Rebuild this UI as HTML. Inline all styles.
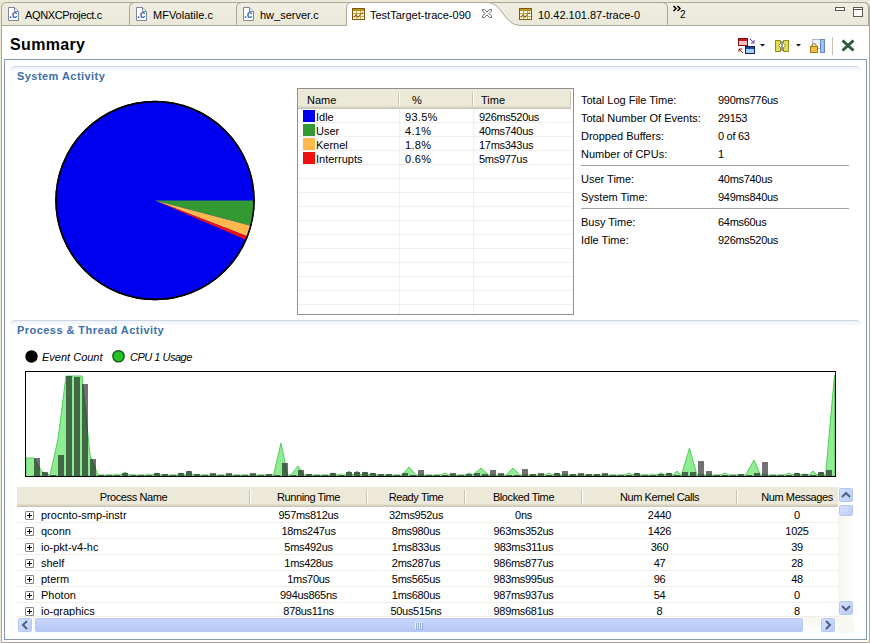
<!DOCTYPE html>
<html>
<head>
<meta charset="utf-8">
<title>Summary</title>
<style>
html,body{margin:0;padding:0;}
body{width:870px;height:643px;overflow:hidden;background:#ece9d8;position:relative;
 font-family:"Liberation Sans",sans-serif;font-size:11px;color:#000;line-height:13px;}
.a{position:absolute;white-space:nowrap;}
.sec{font-weight:bold;color:#3d6fa8;font-size:11px;letter-spacing:0.45px;}
.lbl{left:581px;}
.num{letter-spacing:-0.3px;}
.hd{letter-spacing:-0.4px;}
.val{left:718px;}
.row{left:17px;width:821px;height:16px;border-bottom:1px solid #f1efe6;box-sizing:border-box;overflow:hidden;}
.row span{position:absolute;top:2px;text-align:center;}
.row .n{left:24px;text-align:left;}
.c1{left:233px;width:117px}.c2{left:350px;width:98px}.c3{left:448px;width:117px}.c4{left:565px;width:155px}.c5{left:720px;width:120px}
.plus{position:absolute;left:8px;top:4px;width:7px;height:7px;border:1px solid #848484;background:#fff;border-radius:1px;}
.plus:before{content:"";position:absolute;left:1px;top:3px;width:5px;height:1px;background:#000;}
.plus:after{content:"";position:absolute;left:3px;top:1px;width:1px;height:5px;background:#000;}
.sw{position:absolute;left:5px;top:1px;width:12px;height:12px;}
.trow{left:298px;width:275px;height:14px;border-bottom:1px solid #efefef;box-sizing:border-box;}
.trow span{position:absolute;top:2px;line-height:12px}
.hsep{width:1px;background:#c7c5b2;box-shadow:1px 0 0 #fff;}
</style>
</head>
<body>

<div class="a" style="left:1px;top:2px;width:867px;height:639px;border:1px solid #aca899;border-radius:6px 6px 0 0;background:#fff"></div>
<svg class="a" style="left:0;top:0" width="870" height="30" viewBox="0 0 870 30">
<defs><linearGradient id="tg" x1="0" y1="0" x2="0" y2="1"><stop offset="0" stop-color="#efeee2"/><stop offset="1" stop-color="#eae8d8"/></linearGradient></defs>
<path d="M1.500 25.500 V8 Q1.500 2.500 7 2.500 H863 Q868.500 2.500 868.500 8 V25.500 Z" fill="url(#tg)" stroke="#aca899"/>
<path d="M346.500 27 V8 Q346.500 2.500 352 2.500 H488 C502 2.500 504 25.500 520 25.500 H524 V27 Z" fill="#fff"/>
<path d="M1.500 25.500 H346.500 V8 Q346.500 2.500 352 2.500 H488 C502 2.500 504 25.500 520 25.500 H868.500" fill="none" stroke="#aca899"/>
<path d="M129.500 25 V7 Q129.500 3 133.500 3" fill="none" stroke="#aca899"/>
<path d="M236.500 25 V7 Q236.500 3 240.500 3" fill="none" stroke="#aca899"/>
<path d="M667.500 25 V7 Q667.500 3 663.500 3" fill="none" stroke="#aca899"/>
<!-- close X on active tab -->
<path d="M482.500 9.500 L484.500 9.500 L487 12 L489.500 9.500 L491.500 9.500 L491.500 11 L489 13.500 L491.500 16 L491.500 17.500 L489.500 17.500 L487 15 L484.500 17.500 L482.500 17.500 L482.500 16 L485 13.500 L482.500 11 Z" fill="#fff" stroke="#6b6b6b" stroke-width="1"/>
<!-- chevron >> -->
<path d="M673.500 6 L676 8.500 L673.500 11 M677.500 6 L680 8.500 L677.500 11" fill="none" stroke="#000" stroke-width="1.500"/>
<!-- minimize / maximize -->
<rect x="835.500" y="7.500" width="9" height="3" fill="#fff" stroke="#5a5a4e"/>
<rect x="853.500" y="7.500" width="9" height="9" fill="#fff" stroke="#5a5a4e"/>
<path d="M854 9.500 H862" stroke="#5a5a4e"/>
</svg>
<svg class="a" style="left:8px;top:7px" width="12" height="15" viewBox="0 0 12 15">
<path d="M0.500 0.500 H6.500 L10.500 4.500 V13.500 H0.500 Z" fill="#fff" stroke="#83859a"/>
<path d="M6.500 0.500 V4.500 H10.500" fill="#e8eaf4" stroke="#83859a"/>
<text x="1" y="11" font-family="Liberation Sans, sans-serif" font-size="10" font-weight="bold" fill="#2a68b8">.c</text>
</svg>
<div class="a" style="left:25px;top:9px;letter-spacing:-0.36px">AQNXCProject.c</div>
<svg class="a" style="left:136px;top:7px" width="12" height="15" viewBox="0 0 12 15">
<path d="M0.500 0.500 H6.500 L10.500 4.500 V13.500 H0.500 Z" fill="#fff" stroke="#83859a"/>
<path d="M6.500 0.500 V4.500 H10.500" fill="#e8eaf4" stroke="#83859a"/>
<text x="1" y="11" font-family="Liberation Sans, sans-serif" font-size="10" font-weight="bold" fill="#2a68b8">.c</text>
</svg>
<div class="a" style="left:153px;top:9px">MFVolatile.c</div>
<svg class="a" style="left:243px;top:7px" width="12" height="15" viewBox="0 0 12 15">
<path d="M0.500 0.500 H6.500 L10.500 4.500 V13.500 H0.500 Z" fill="#fff" stroke="#83859a"/>
<path d="M6.500 0.500 V4.500 H10.500" fill="#e8eaf4" stroke="#83859a"/>
<text x="1" y="11" font-family="Liberation Sans, sans-serif" font-size="10" font-weight="bold" fill="#2a68b8">.c</text>
</svg>
<div class="a" style="left:260px;top:9px">hw_server.c</div>
<svg class="a" style="left:352px;top:8px" width="13" height="12" viewBox="0 0 13 12">
<rect x="0.500" y="0.500" width="12" height="11" fill="#fff8e0" stroke="#7d5a0f"/>
<rect x="1" y="1" width="11" height="2" fill="#b8921f"/>
<path d="M1 5.500 H12 M1 8.500 H12 M4.500 3 V11 M8.500 3 V11" stroke="#c4a548" fill="none"/>
<path d="M2 9.500 L4 6.500 L6 9.500 L8 6.500 L11 4.500" stroke="#7d5a0f" fill="none"/>
</svg>
<div class="a" style="left:370px;top:9px">TestTarget-trace-090</div>
<svg class="a" style="left:519px;top:8px" width="13" height="12" viewBox="0 0 13 12">
<rect x="0.500" y="0.500" width="12" height="11" fill="#fff8e0" stroke="#7d5a0f"/>
<rect x="1" y="1" width="11" height="2" fill="#b8921f"/>
<path d="M1 5.500 H12 M1 8.500 H12 M4.500 3 V11 M8.500 3 V11" stroke="#c4a548" fill="none"/>
<path d="M2 9.500 L4 6.500 L6 9.500 L8 6.500 L11 4.500" stroke="#7d5a0f" fill="none"/>
</svg>
<div class="a" style="left:538px;top:9px">10.42.101.87-trace-0</div>
<div class="a" style="left:680px;top:8px;font-size:10px">2</div>
<div class="a" style="left:10px;top:35px;font-size:16px;font-weight:bold;line-height:20px;letter-spacing:0.35px">Summary</div>
<svg class="a" style="left:730px;top:34px" width="130" height="24" viewBox="730 34 130 24">
<!-- icon 1: two windows with arrows -->
<rect x="738.500" y="38.500" width="9" height="7" fill="#f6c0c0" stroke="#7a1010"/>
<rect x="739" y="39" width="8" height="2" fill="#c01818"/>
<rect x="745.500" y="46.500" width="9" height="7" fill="#9fd0f0" stroke="#102060"/>
<rect x="746" y="47" width="8" height="2" fill="#1848a0"/>
<path d="M750 39 L754 43 M754 40 V43 H751" stroke="#5a3aa8" fill="none"/>
<path d="M743 53 L739 49 M739 52 V49 H742" stroke="#b01010" fill="none"/>
<path d="M760 44 H765 L762.500 46.500 Z" fill="#000"/>
<!-- icon 2: compare -->
<path d="M775.500 40.500 H780.500 V43.500 L778.500 45.500 L780.500 47.500 V51.500 H775.500 Z" fill="#dede58" stroke="#8a8a20"/>
<path d="M788.500 40.500 H783.500 V43.500 L785.500 45.500 L783.500 47.500 V51.500 H788.500 Z" fill="#dede58" stroke="#8a8a20"/>
<path d="M782 41 V51" stroke="#404030"/>
<path d="M796 44 H801 L798.500 46.500 Z" fill="#000"/>
<!-- icon 3: lock + panel -->
<rect x="812.500" y="39.500" width="8" height="9" fill="#eef2fb" stroke="#a8b8d8"/>
<rect x="820.500" y="39.500" width="4" height="13" fill="#9fc0f0" stroke="#6888c0"/>
<rect x="810.500" y="46.500" width="7" height="6" fill="#f0c040" stroke="#a07810"/>
<path d="M812 46 V44.500 Q814 42.500 816 44.500 V46" fill="none" stroke="#a07810"/>
<!-- separator -->
<path d="M832.500 37 V55" stroke="#c5c2b0"/>
<!-- X -->
<path d="M842.500 40.500 L853.500 50.500 M853.500 40.500 L842.500 50.500" stroke="#2c5a34" stroke-width="3" fill="none"/>
</svg>
<div class="a" style="left:4px;top:59px;width:863px;height:581px;border:1px solid #8497ae;box-sizing:border-box"></div>
<div class="a" style="left:10px;top:66px;width:851px;height:6px;border-top:1px solid #cdd6e4;border-radius:5px 5px 0 0;background:linear-gradient(#edf2fa,#fff)"></div>
<div class="a sec" style="left:17px;top:70px">System Activity</div>
<div class="a" style="left:10px;top:320px;width:851px;height:6px;border-top:1px solid #cdd6e4;border-radius:5px 5px 0 0;background:linear-gradient(#edf2fa,#fff)"></div>
<div class="a sec" style="left:17px;top:324px">Process &amp; Thread Activity</div>
<svg class="a" style="left:50px;top:95px" width="210" height="212" viewBox="50 95 210 212"><circle cx="155" cy="200.5" r="99" fill="#0000f0" stroke="#000" stroke-width="1.500"/><path d="M155 200.5 L254.00 200.50 A99 99 0 0 1 250.73 225.72 Z" fill="#339933"/><path d="M155 200.5 L250.73 225.72 A99 99 0 0 1 247.28 236.37 Z" fill="#ffb84d"/><path d="M155 200.5 L247.28 236.37 A99 99 0 0 1 245.86 239.82 Z" fill="#ee1111"/><circle cx="155" cy="200.5" r="99" fill="none" stroke="#000" stroke-width="1.500"/></svg>
<div class="a" style="left:297px;top:88px;width:277px;height:227px;border:1px solid #8e8f8f;box-sizing:border-box;background:#fff"></div>
<div class="a" style="left:298px;top:89px;width:273px;height:20px;background:#ece9d8;box-shadow:inset 0 -1px 0 #cbc7b8,inset 0 -2px 0 #d6d2c2,inset 0 -3px 0 #e2dece"></div>
<div class="a hsep" style="left:398px;top:92px;height:14px"></div>
<div class="a hsep" style="left:472px;top:92px;height:14px"></div>
<div class="a hsep" style="left:570px;top:92px;height:14px"></div>
<div class="a" style="left:307px;top:94px">Name</div>
<div class="a" style="left:412px;top:94px">%</div>
<div class="a" style="left:481px;top:94px">Time</div>
<div class="a trow" style="top:109px;height:14px;"><i class="sw" style="background:#0000ee"></i><span style="left:18px">Idle</span><span style="left:107px;letter-spacing:0.3px">93.5%</span><span class="num" style="left:181px">926ms520us</span></div>
<div class="a trow" style="top:123px;height:14px;"><i class="sw" style="background:#339933"></i><span style="left:18px">User</span><span style="left:107px;letter-spacing:0.3px">4.1%</span><span class="num" style="left:181px">40ms740us</span></div>
<div class="a trow" style="top:137px;height:14px;"><i class="sw" style="background:#ffb84d"></i><span style="left:18px">Kernel</span><span style="left:107px;letter-spacing:0.3px">1.8%</span><span class="num" style="left:181px">17ms343us</span></div>
<div class="a trow" style="top:151px;height:14px;"><i class="sw" style="background:#ee1111"></i><span style="left:18px">Interrupts</span><span style="left:107px;letter-spacing:0.3px">0.6%</span><span class="num" style="left:181px">5ms977us</span></div>
<div class="a trow" style="top:165px;height:14px;"></div>
<div class="a trow" style="top:179px;height:14px;"></div>
<div class="a trow" style="top:193px;height:14px;"></div>
<div class="a trow" style="top:207px;height:14px;"></div>
<div class="a trow" style="top:221px;height:14px;"></div>
<div class="a trow" style="top:235px;height:14px;"></div>
<div class="a trow" style="top:249px;height:14px;"></div>
<div class="a trow" style="top:263px;height:14px;"></div>
<div class="a trow" style="top:277px;height:14px;"></div>
<div class="a trow" style="top:291px;height:14px;"></div>
<div class="a trow" style="top:305px;height:9px;border-bottom:0;"></div>
<div class="a" style="left:399px;top:109px;width:1px;height:205px;background:#efefef"></div>
<div class="a" style="left:473px;top:109px;width:1px;height:205px;background:#efefef"></div>
<div class="a lbl" style="top:94px">Total Log File Time:</div><div class="a val num" style="top:94px">990ms776us</div>
<div class="a lbl" style="top:112px">Total Number Of Events:</div><div class="a val num" style="top:112px">29153</div>
<div class="a lbl" style="top:130px">Dropped Buffers:</div><div class="a val num" style="top:130px">0 of 63</div>
<div class="a lbl" style="top:148px">Number of CPUs:</div><div class="a val num" style="top:148px">1</div>
<div class="a lbl" style="top:173px">User Time:</div><div class="a val num" style="top:173px">40ms740us</div>
<div class="a lbl" style="top:191px">System Time:</div><div class="a val num" style="top:191px">949ms840us</div>
<div class="a lbl" style="top:216px">Busy Time:</div><div class="a val num" style="top:216px">64ms60us</div>
<div class="a lbl" style="top:234px">Idle Time:</div><div class="a val num" style="top:234px">926ms520us</div>
<div class="a" style="left:581px;top:165px;width:268px;height:1px;background:#a0a0a0"></div>
<div class="a" style="left:581px;top:208px;width:268px;height:1px;background:#a0a0a0"></div>
<svg class="a" style="left:24px;top:348px" width="110" height="18" viewBox="24 348 110 18">
<circle cx="31.500" cy="356.500" r="6.200" fill="#000"/>
<circle cx="118.500" cy="356.300" r="5.700" fill="#25c425" stroke="#0d4a12" stroke-width="1.200"/>
</svg>
<div class="a" style="left:42px;top:351px;font-style:italic">Event Count</div>
<div class="a" style="left:130px;top:351px;font-style:italic;letter-spacing:-0.5px">CPU 1 Usage</div>
<svg class="a" style="left:25px;top:371px" width="811" height="106" viewBox="25 371 811 106"><rect x="25.500" y="371.500" width="810" height="105" fill="#fff" stroke="#000"/><polygon points="26,476 26,458 34,458 42,472 50,475 58,439 66,376 82,376 90,455 98,475 113,475 117,474 121,475 121,475 125,472 129,475 145,475 149,474 153,475 153,475 157,473 161,475 177,475 181,473 185,475 185,475 189,471 193,475 273.5,475 281,443 287.5,475 291,475 298,466 304,475 329,475 333,473 337,475 337,475 341,474 345,475 345,475 349,471 353,475 353,475 357,471 361,475 361,475 365,472 369,475 369,475 373,473 377,475 402,475 409,467 416,475 441,475 445,473 449,475 465,475 469,473 473,475 473,475 481,468 489,475 506,475 513,468 520,475 545,475 549,473 553,475 553,475 557,473 561,475 625,475 629,473 633,475 633,475 637,473 641,475 649,475 653,474 657,475 657,475 661,473 665,475 665,475 669,473 673,475 673,475 677,471 681,475 681.5,475 689.5,448 697,475 721,475 725,473 729,475 745.5,475 754,460 760.5,475 785,475 789,473 793,475 793,475 797,473 801,475 801,475 805,474 809,475 809,475 813,471 817,475 817,475 821,472 825,475 826,475 826,470 834.5,375 835,476 835,476" fill="#8fec92" stroke="#55cc5e" stroke-width="1"/><rect x="26" y="474" width="6" height="2" fill="#9fe0a0"/><rect x="34" y="474" width="6" height="2" fill="#9fe0a0"/><rect x="42" y="474" width="6" height="2" fill="#9fe0a0"/><rect x="50" y="474" width="6" height="2" fill="#9fe0a0"/><rect x="58" y="474" width="6" height="2" fill="#9fe0a0"/><rect x="66" y="474" width="6" height="2" fill="#9fe0a0"/><rect x="74" y="474" width="6" height="2" fill="#9fe0a0"/><rect x="82" y="474" width="6" height="2" fill="#9fe0a0"/><rect x="90" y="474" width="6" height="2" fill="#9fe0a0"/><rect x="98" y="474" width="6" height="2" fill="#9fe0a0"/><rect x="106" y="474" width="6" height="2" fill="#9fe0a0"/><rect x="114" y="474" width="6" height="2" fill="#9fe0a0"/><rect x="122" y="474" width="6" height="2" fill="#9fe0a0"/><rect x="130" y="474" width="6" height="2" fill="#9fe0a0"/><rect x="138" y="474" width="6" height="2" fill="#9fe0a0"/><rect x="146" y="474" width="6" height="2" fill="#9fe0a0"/><rect x="154" y="474" width="6" height="2" fill="#9fe0a0"/><rect x="162" y="474" width="6" height="2" fill="#9fe0a0"/><rect x="170" y="474" width="6" height="2" fill="#9fe0a0"/><rect x="178" y="474" width="6" height="2" fill="#9fe0a0"/><rect x="186" y="474" width="6" height="2" fill="#9fe0a0"/><rect x="194" y="474" width="6" height="2" fill="#9fe0a0"/><rect x="202" y="474" width="6" height="2" fill="#9fe0a0"/><rect x="210" y="474" width="6" height="2" fill="#9fe0a0"/><rect x="218" y="474" width="6" height="2" fill="#9fe0a0"/><rect x="226" y="474" width="6" height="2" fill="#9fe0a0"/><rect x="234" y="474" width="6" height="2" fill="#9fe0a0"/><rect x="242" y="474" width="6" height="2" fill="#9fe0a0"/><rect x="250" y="474" width="6" height="2" fill="#9fe0a0"/><rect x="258" y="474" width="6" height="2" fill="#9fe0a0"/><rect x="266" y="474" width="6" height="2" fill="#9fe0a0"/><rect x="274" y="474" width="6" height="2" fill="#9fe0a0"/><rect x="282" y="474" width="6" height="2" fill="#9fe0a0"/><rect x="290" y="474" width="6" height="2" fill="#9fe0a0"/><rect x="298" y="474" width="6" height="2" fill="#9fe0a0"/><rect x="306" y="474" width="6" height="2" fill="#9fe0a0"/><rect x="314" y="474" width="6" height="2" fill="#9fe0a0"/><rect x="322" y="474" width="6" height="2" fill="#9fe0a0"/><rect x="330" y="474" width="6" height="2" fill="#9fe0a0"/><rect x="338" y="474" width="6" height="2" fill="#9fe0a0"/><rect x="346" y="474" width="6" height="2" fill="#9fe0a0"/><rect x="354" y="474" width="6" height="2" fill="#9fe0a0"/><rect x="362" y="474" width="6" height="2" fill="#9fe0a0"/><rect x="370" y="474" width="6" height="2" fill="#9fe0a0"/><rect x="378" y="474" width="6" height="2" fill="#9fe0a0"/><rect x="386" y="474" width="6" height="2" fill="#9fe0a0"/><rect x="394" y="474" width="6" height="2" fill="#9fe0a0"/><rect x="402" y="474" width="6" height="2" fill="#9fe0a0"/><rect x="410" y="474" width="6" height="2" fill="#9fe0a0"/><rect x="418" y="474" width="6" height="2" fill="#9fe0a0"/><rect x="426" y="474" width="6" height="2" fill="#9fe0a0"/><rect x="434" y="474" width="6" height="2" fill="#9fe0a0"/><rect x="442" y="474" width="6" height="2" fill="#9fe0a0"/><rect x="450" y="474" width="6" height="2" fill="#9fe0a0"/><rect x="458" y="474" width="6" height="2" fill="#9fe0a0"/><rect x="466" y="474" width="6" height="2" fill="#9fe0a0"/><rect x="474" y="474" width="6" height="2" fill="#9fe0a0"/><rect x="482" y="474" width="6" height="2" fill="#9fe0a0"/><rect x="490" y="474" width="6" height="2" fill="#9fe0a0"/><rect x="498" y="474" width="6" height="2" fill="#9fe0a0"/><rect x="506" y="474" width="6" height="2" fill="#9fe0a0"/><rect x="514" y="474" width="6" height="2" fill="#9fe0a0"/><rect x="522" y="474" width="6" height="2" fill="#9fe0a0"/><rect x="530" y="474" width="6" height="2" fill="#9fe0a0"/><rect x="538" y="474" width="6" height="2" fill="#9fe0a0"/><rect x="546" y="474" width="6" height="2" fill="#9fe0a0"/><rect x="554" y="474" width="6" height="2" fill="#9fe0a0"/><rect x="562" y="474" width="6" height="2" fill="#9fe0a0"/><rect x="570" y="474" width="6" height="2" fill="#9fe0a0"/><rect x="578" y="474" width="6" height="2" fill="#9fe0a0"/><rect x="586" y="474" width="6" height="2" fill="#9fe0a0"/><rect x="594" y="474" width="6" height="2" fill="#9fe0a0"/><rect x="602" y="474" width="6" height="2" fill="#9fe0a0"/><rect x="610" y="474" width="6" height="2" fill="#9fe0a0"/><rect x="618" y="474" width="6" height="2" fill="#9fe0a0"/><rect x="626" y="474" width="6" height="2" fill="#9fe0a0"/><rect x="634" y="474" width="6" height="2" fill="#9fe0a0"/><rect x="642" y="474" width="6" height="2" fill="#9fe0a0"/><rect x="650" y="474" width="6" height="2" fill="#9fe0a0"/><rect x="658" y="474" width="6" height="2" fill="#9fe0a0"/><rect x="666" y="474" width="6" height="2" fill="#9fe0a0"/><rect x="674" y="474" width="6" height="2" fill="#9fe0a0"/><rect x="682" y="474" width="6" height="2" fill="#9fe0a0"/><rect x="690" y="474" width="6" height="2" fill="#9fe0a0"/><rect x="698" y="474" width="6" height="2" fill="#9fe0a0"/><rect x="706" y="474" width="6" height="2" fill="#9fe0a0"/><rect x="714" y="474" width="6" height="2" fill="#9fe0a0"/><rect x="722" y="474" width="6" height="2" fill="#9fe0a0"/><rect x="730" y="474" width="6" height="2" fill="#9fe0a0"/><rect x="738" y="474" width="6" height="2" fill="#9fe0a0"/><rect x="746" y="474" width="6" height="2" fill="#9fe0a0"/><rect x="754" y="474" width="6" height="2" fill="#9fe0a0"/><rect x="762" y="474" width="6" height="2" fill="#9fe0a0"/><rect x="770" y="474" width="6" height="2" fill="#9fe0a0"/><rect x="778" y="474" width="6" height="2" fill="#9fe0a0"/><rect x="786" y="474" width="6" height="2" fill="#9fe0a0"/><rect x="794" y="474" width="6" height="2" fill="#9fe0a0"/><rect x="802" y="474" width="6" height="2" fill="#9fe0a0"/><rect x="810" y="474" width="6" height="2" fill="#9fe0a0"/><rect x="818" y="474" width="6" height="2" fill="#9fe0a0"/><rect x="826" y="474" width="6" height="2" fill="#9fe0a0"/><rect x="34" y="458" width="6" height="18" fill="#0a0a10" fill-opacity="0.580"/><rect x="42" y="472" width="6" height="4" fill="#0a0a10" fill-opacity="0.580"/><rect x="50" y="475" width="6" height="1" fill="#0a0a10" fill-opacity="0.580"/><rect x="58" y="455" width="6" height="21" fill="#0a0a10" fill-opacity="0.580"/><rect x="66" y="376" width="6" height="100" fill="#0a0a10" fill-opacity="0.580"/><rect x="74" y="377" width="6" height="99" fill="#0a0a10" fill-opacity="0.580"/><rect x="82" y="384" width="6" height="92" fill="#0a0a10" fill-opacity="0.580"/><rect x="90" y="459" width="6" height="17" fill="#0a0a10" fill-opacity="0.580"/><rect x="98" y="475" width="6" height="1" fill="#0a0a10" fill-opacity="0.580"/><rect x="106" y="475" width="6" height="1" fill="#0a0a10" fill-opacity="0.580"/><rect x="114" y="475" width="6" height="1" fill="#0a0a10" fill-opacity="0.580"/><rect x="122" y="473" width="6" height="3" fill="#0a0a10" fill-opacity="0.580"/><rect x="130" y="475" width="6" height="1" fill="#0a0a10" fill-opacity="0.580"/><rect x="138" y="475" width="6" height="1" fill="#0a0a10" fill-opacity="0.580"/><rect x="146" y="475" width="6" height="1" fill="#0a0a10" fill-opacity="0.580"/><rect x="154" y="473" width="6" height="3" fill="#0a0a10" fill-opacity="0.580"/><rect x="162" y="474" width="6" height="2" fill="#0a0a10" fill-opacity="0.580"/><rect x="170" y="475" width="6" height="1" fill="#0a0a10" fill-opacity="0.580"/><rect x="178" y="473" width="6" height="3" fill="#0a0a10" fill-opacity="0.580"/><rect x="186" y="471" width="6" height="5" fill="#0a0a10" fill-opacity="0.580"/><rect x="194" y="474" width="6" height="2" fill="#0a0a10" fill-opacity="0.580"/><rect x="202" y="475" width="6" height="1" fill="#0a0a10" fill-opacity="0.580"/><rect x="210" y="473" width="6" height="3" fill="#0a0a10" fill-opacity="0.580"/><rect x="218" y="475" width="6" height="1" fill="#0a0a10" fill-opacity="0.580"/><rect x="226" y="473" width="6" height="3" fill="#0a0a10" fill-opacity="0.580"/><rect x="234" y="475" width="6" height="1" fill="#0a0a10" fill-opacity="0.580"/><rect x="242" y="475" width="6" height="1" fill="#0a0a10" fill-opacity="0.580"/><rect x="250" y="473" width="6" height="3" fill="#0a0a10" fill-opacity="0.580"/><rect x="258" y="475" width="6" height="1" fill="#0a0a10" fill-opacity="0.580"/><rect x="266" y="474" width="6" height="2" fill="#0a0a10" fill-opacity="0.580"/><rect x="274" y="475" width="6" height="1" fill="#0a0a10" fill-opacity="0.580"/><rect x="282" y="463" width="6" height="13" fill="#0a0a10" fill-opacity="0.580"/><rect x="290" y="475" width="6" height="1" fill="#0a0a10" fill-opacity="0.580"/><rect x="298" y="470" width="6" height="6" fill="#0a0a10" fill-opacity="0.580"/><rect x="306" y="474" width="6" height="2" fill="#0a0a10" fill-opacity="0.580"/><rect x="314" y="475" width="6" height="1" fill="#0a0a10" fill-opacity="0.580"/><rect x="322" y="475" width="6" height="1" fill="#0a0a10" fill-opacity="0.580"/><rect x="330" y="473" width="6" height="3" fill="#0a0a10" fill-opacity="0.580"/><rect x="338" y="475" width="6" height="1" fill="#0a0a10" fill-opacity="0.580"/><rect x="346" y="472" width="6" height="4" fill="#0a0a10" fill-opacity="0.580"/><rect x="354" y="472" width="6" height="4" fill="#0a0a10" fill-opacity="0.580"/><rect x="362" y="472" width="6" height="4" fill="#0a0a10" fill-opacity="0.580"/><rect x="370" y="473" width="6" height="3" fill="#0a0a10" fill-opacity="0.580"/><rect x="378" y="474" width="6" height="2" fill="#0a0a10" fill-opacity="0.580"/><rect x="386" y="474" width="6" height="2" fill="#0a0a10" fill-opacity="0.580"/><rect x="394" y="475" width="6" height="1" fill="#0a0a10" fill-opacity="0.580"/><rect x="402" y="473" width="6" height="3" fill="#0a0a10" fill-opacity="0.580"/><rect x="410" y="475" width="6" height="1" fill="#0a0a10" fill-opacity="0.580"/><rect x="418" y="470" width="6" height="6" fill="#0a0a10" fill-opacity="0.580"/><rect x="426" y="475" width="6" height="1" fill="#0a0a10" fill-opacity="0.580"/><rect x="434" y="475" width="6" height="1" fill="#0a0a10" fill-opacity="0.580"/><rect x="442" y="475" width="6" height="1" fill="#0a0a10" fill-opacity="0.580"/><rect x="450" y="473" width="6" height="3" fill="#0a0a10" fill-opacity="0.580"/><rect x="458" y="475" width="6" height="1" fill="#0a0a10" fill-opacity="0.580"/><rect x="466" y="474" width="6" height="2" fill="#0a0a10" fill-opacity="0.580"/><rect x="474" y="473" width="6" height="3" fill="#0a0a10" fill-opacity="0.580"/><rect x="482" y="474" width="6" height="2" fill="#0a0a10" fill-opacity="0.580"/><rect x="490" y="470" width="6" height="6" fill="#0a0a10" fill-opacity="0.580"/><rect x="498" y="473" width="6" height="3" fill="#0a0a10" fill-opacity="0.580"/><rect x="506" y="475" width="6" height="1" fill="#0a0a10" fill-opacity="0.580"/><rect x="514" y="475" width="6" height="1" fill="#0a0a10" fill-opacity="0.580"/><rect x="522" y="469" width="6" height="7" fill="#0a0a10" fill-opacity="0.580"/><rect x="530" y="474" width="6" height="2" fill="#0a0a10" fill-opacity="0.580"/><rect x="538" y="473" width="6" height="3" fill="#0a0a10" fill-opacity="0.580"/><rect x="546" y="475" width="6" height="1" fill="#0a0a10" fill-opacity="0.580"/><rect x="554" y="473" width="6" height="3" fill="#0a0a10" fill-opacity="0.580"/><rect x="562" y="471" width="6" height="5" fill="#0a0a10" fill-opacity="0.580"/><rect x="570" y="474" width="6" height="2" fill="#0a0a10" fill-opacity="0.580"/><rect x="578" y="473" width="6" height="3" fill="#0a0a10" fill-opacity="0.580"/><rect x="586" y="474" width="6" height="2" fill="#0a0a10" fill-opacity="0.580"/><rect x="594" y="474" width="6" height="2" fill="#0a0a10" fill-opacity="0.580"/><rect x="602" y="473" width="6" height="3" fill="#0a0a10" fill-opacity="0.580"/><rect x="610" y="475" width="6" height="1" fill="#0a0a10" fill-opacity="0.580"/><rect x="618" y="475" width="6" height="1" fill="#0a0a10" fill-opacity="0.580"/><rect x="626" y="475" width="6" height="1" fill="#0a0a10" fill-opacity="0.580"/><rect x="634" y="473" width="6" height="3" fill="#0a0a10" fill-opacity="0.580"/><rect x="642" y="475" width="6" height="1" fill="#0a0a10" fill-opacity="0.580"/><rect x="650" y="475" width="6" height="1" fill="#0a0a10" fill-opacity="0.580"/><rect x="658" y="474" width="6" height="2" fill="#0a0a10" fill-opacity="0.580"/><rect x="666" y="473" width="6" height="3" fill="#0a0a10" fill-opacity="0.580"/><rect x="674" y="475" width="6" height="1" fill="#0a0a10" fill-opacity="0.580"/><rect x="682" y="472" width="6" height="4" fill="#0a0a10" fill-opacity="0.580"/><rect x="690" y="472" width="6" height="4" fill="#0a0a10" fill-opacity="0.580"/><rect x="698" y="461" width="6" height="15" fill="#0a0a10" fill-opacity="0.580"/><rect x="706" y="471" width="6" height="5" fill="#0a0a10" fill-opacity="0.580"/><rect x="714" y="475" width="6" height="1" fill="#0a0a10" fill-opacity="0.580"/><rect x="722" y="475" width="6" height="1" fill="#0a0a10" fill-opacity="0.580"/><rect x="730" y="475" width="6" height="1" fill="#0a0a10" fill-opacity="0.580"/><rect x="738" y="474" width="6" height="2" fill="#0a0a10" fill-opacity="0.580"/><rect x="746" y="475" width="6" height="1" fill="#0a0a10" fill-opacity="0.580"/><rect x="754" y="473" width="6" height="3" fill="#0a0a10" fill-opacity="0.580"/><rect x="762" y="462" width="6" height="14" fill="#0a0a10" fill-opacity="0.580"/><rect x="770" y="475" width="6" height="1" fill="#0a0a10" fill-opacity="0.580"/><rect x="778" y="475" width="6" height="1" fill="#0a0a10" fill-opacity="0.580"/><rect x="786" y="475" width="6" height="1" fill="#0a0a10" fill-opacity="0.580"/><rect x="794" y="473" width="6" height="3" fill="#0a0a10" fill-opacity="0.580"/><rect x="802" y="474" width="6" height="2" fill="#0a0a10" fill-opacity="0.580"/><rect x="810" y="475" width="6" height="1" fill="#0a0a10" fill-opacity="0.580"/><rect x="818" y="472" width="6" height="4" fill="#0a0a10" fill-opacity="0.580"/><rect x="826" y="470" width="6" height="6" fill="#0a0a10" fill-opacity="0.580"/><rect x="25.500" y="371.500" width="810" height="105" fill="none" stroke="#000"/></svg>
<div class="a" style="left:17px;top:487px;width:821px;height:20px;background:#ece9d8;box-shadow:inset 0 -1px 0 #cbc7b8,inset 0 -2px 0 #d6d2c2,inset 0 -3px 0 #e2dece"></div>
<div class="a hsep" style="left:249px;top:490px;height:14px"></div>
<div class="a hsep" style="left:366px;top:490px;height:14px"></div>
<div class="a hsep" style="left:464px;top:490px;height:14px"></div>
<div class="a hsep" style="left:581px;top:490px;height:14px"></div>
<div class="a hsep" style="left:736px;top:490px;height:14px"></div>
<div class="a hd" style="left:17px;top:491px;width:233px;text-align:center">Process Name</div>
<div class="a hd" style="left:250px;top:491px;width:117px;text-align:center">Running Time</div>
<div class="a hd" style="left:367px;top:491px;width:98px;text-align:center">Ready Time</div>
<div class="a hd" style="left:465px;top:491px;width:117px;text-align:center">Blocked Time</div>
<div class="a hd" style="left:582px;top:491px;width:155px;text-align:center">Num Kernel Calls</div>
<div class="a hd" style="left:737px;top:491px;width:120px;text-align:center">Num Messages</div>
<div class="a row" style="top:507px;height:16px"><i class="plus"></i><span class="n">procnto-smp-instr</span><span class="c1 num">957ms812us</span><span class="c2 num">32ms952us</span><span class="c3 num">0ns</span><span class="c4 num">2440</span><span class="c5 num">0</span></div>
<div class="a row" style="top:523px;height:16px"><i class="plus"></i><span class="n">qconn</span><span class="c1 num">18ms247us</span><span class="c2 num">8ms980us</span><span class="c3 num">963ms352us</span><span class="c4 num">1426</span><span class="c5 num">1025</span></div>
<div class="a row" style="top:539px;height:16px"><i class="plus"></i><span class="n">io-pkt-v4-hc</span><span class="c1 num">5ms492us</span><span class="c2 num">1ms833us</span><span class="c3 num">983ms311us</span><span class="c4 num">360</span><span class="c5 num">39</span></div>
<div class="a row" style="top:555px;height:16px"><i class="plus"></i><span class="n">shelf</span><span class="c1 num">1ms428us</span><span class="c2 num">2ms287us</span><span class="c3 num">986ms877us</span><span class="c4 num">47</span><span class="c5 num">28</span></div>
<div class="a row" style="top:571px;height:16px"><i class="plus"></i><span class="n">pterm</span><span class="c1 num">1ms70us</span><span class="c2 num">5ms565us</span><span class="c3 num">983ms995us</span><span class="c4 num">96</span><span class="c5 num">48</span></div>
<div class="a row" style="top:587px;height:16px"><i class="plus"></i><span class="n">Photon</span><span class="c1 num">994us865ns</span><span class="c2 num">1ms680us</span><span class="c3 num">987ms937us</span><span class="c4 num">54</span><span class="c5 num">0</span></div>
<div class="a row" style="top:603px;height:14px"><i class="plus"></i><span class="n">io-graphics</span><span class="c1 num">878us11ns</span><span class="c2 num">50us515ns</span><span class="c3 num">989ms681us</span><span class="c4 num">8</span><span class="c5 num">8</span></div>
<div class="a" style="left:838px;top:487px;width:16px;height:130px;background:linear-gradient(90deg,#f6f5f0,#fefefd)"></div>
<div class="a" style="left:838px;top:487px;width:16px;height:16px;background:linear-gradient(135deg,#d6e2fe,#b9cbf6);border:1px solid #fff;border-radius:3px;box-sizing:border-box;box-shadow:inset 0 0 0 1px #b4c7f2"></div>
<div class="a" style="left:838px;top:504px;width:16px;height:13px;background:linear-gradient(135deg,#d6e2fe,#b9cbf6);border:1px solid #fff;border-radius:3px;box-sizing:border-box;box-shadow:inset 0 0 0 1px #b4c7f2"></div>
<div class="a" style="left:838px;top:600px;width:16px;height:16px;background:linear-gradient(135deg,#d6e2fe,#b9cbf6);border:1px solid #fff;border-radius:3px;box-sizing:border-box;box-shadow:inset 0 0 0 1px #b4c7f2"></div>
<div class="a" style="left:17px;top:617px;width:821px;height:16px;background:linear-gradient(#f6f5f0,#fefefd)"></div>
<div class="a" style="left:17px;top:617px;width:16px;height:16px;background:linear-gradient(135deg,#d6e2fe,#b9cbf6);border:1px solid #fff;border-radius:3px;box-sizing:border-box;box-shadow:inset 0 0 0 1px #b4c7f2"></div>
<div class="a" style="left:820px;top:617px;width:16px;height:16px;background:linear-gradient(135deg,#d6e2fe,#b9cbf6);border:1px solid #fff;border-radius:3px;box-sizing:border-box;box-shadow:inset 0 0 0 1px #b4c7f2"></div>
<div class="a" style="left:34px;top:617px;width:770px;height:16px;background:linear-gradient(#c9d8fc,#bccdf8 60%,#b5c6f4);border:1px solid #fff;border-radius:3px;box-sizing:border-box;box-shadow:inset 0 0 0 1px #b4c7f2"></div>
<div class="a" style="left:838px;top:617px;width:16px;height:16px;background:#f8f7f2"></div>
<svg class="a" style="left:17px;top:487px" width="840" height="148" viewBox="17 487 840 148">
<path d="M842 497 L846 493 L850 497" fill="none" stroke="#4d6185" stroke-width="2"/>
<path d="M842 606 L846 610 L850 606" fill="none" stroke="#4d6185" stroke-width="2"/>
<path d="M27 621 L23 625 L27 629" fill="none" stroke="#4d6185" stroke-width="2"/>
<path d="M826 621 L830 625 L826 629" fill="none" stroke="#4d6185" stroke-width="2"/>
<path d="M415.500 622 V629 M417.500 622 V629 M419.500 622 V629 M421.500 622 V629" stroke="#eef3ff" stroke-width="1"/>
<path d="M416.500 623 V630 M418.500 623 V630 M420.500 623 V630 M422.500 623 V630" stroke="#8ea6dc" stroke-width="1"/>
</svg>
</body>
</html>
